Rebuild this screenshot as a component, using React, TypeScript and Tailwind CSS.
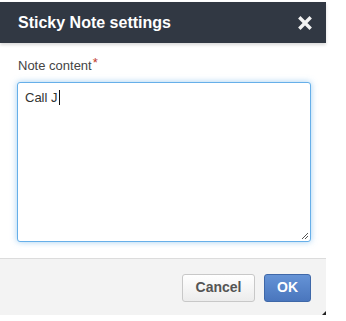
import React from "react";

export default function App() {
  return (
    <div className="w-[346px] h-[321px] bg-white" style={{ fontFamily: '"Liberation Sans", Arial, sans-serif' }}>
      <div className="w-[326px] pt-[2px]">
        <div className="h-[41px] bg-[#313843] flex items-center justify-between pl-[18px] pr-[14px] shadow-[0_2px_3px_rgba(0,0,0,0.15)] relative">
          <span className="text-white font-bold text-[16px] leading-none">Sticky Note settings</span>
          <svg width="14" height="14" viewBox="0 0 14 14">
            <path d="M2.5 2.5 L11.5 11.5 M11.5 2.5 L2.5 11.5" stroke="#f2f2f2" strokeWidth="3.4" strokeLinecap="square" />
          </svg>
        </div>
        <div className="px-[17px] pt-[16px] pb-[16px]">
          <div className="text-[13px] text-[#444] leading-none pl-[1px]">
            Note content<span className="text-[#c0392b] relative top-[-3px] ml-[1px]">*</span>
          </div>
          <div className="mt-[10px] h-[160px] w-[294px] border border-[#66afe9] rounded-[3px] shadow-[0_0_6px_rgba(102,175,233,0.6)] bg-white relative px-[7px] pt-[6px] leading-[16px]">
            <span className="text-[13px] text-[#333]">Call J</span>
            <span className="inline-block w-[1px] h-[15px] bg-[#111] align-[-3px] ml-[1px]"></span>
            <svg width="8" height="8" viewBox="0 0 8 8" className="absolute right-[1px] bottom-[1px]">
              <path d="M7 1 L1 7 M7 4 L4 7" stroke="#555" strokeWidth="1" />
            </svg>
          </div>
        </div>
        <div className="border-t border-[#dcdcdc] bg-[#f3f3f3] h-[57px] flex items-center justify-end gap-[9px] pr-[15px] pt-[1px] relative">
          <button className="w-[73px] h-[28px] rounded-[3px] border border-[#c8c8c8] bg-gradient-to-b from-[#ffffff] to-[#ececec] text-[#555] font-bold text-[14px]">
            Cancel
          </button>
          <button className="w-[47px] h-[28px] rounded-[3px] border border-[#3f68a8] bg-gradient-to-b from-[#6593d6] to-[#4a76bd] text-white font-bold text-[14px]">
            OK
          </button>
          <div className="absolute right-0 bottom-0 w-0 h-0 border-l-[4px] border-l-transparent border-b-[4px] border-b-[#222]"></div>
        </div>
      </div>
    </div>
  );
}
